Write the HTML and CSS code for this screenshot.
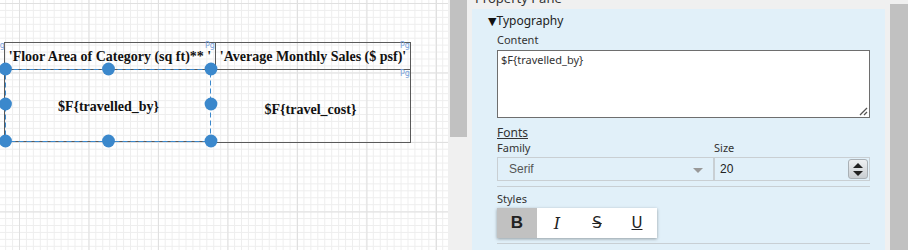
FILE: index.html
```
<!DOCTYPE html>
<html>
<head>
<meta charset="utf-8">
<link rel="stylesheet" href="styles.css">
</head>
<body>
<div class="app">
  <div class="canvas">
    <span class="pg pg-a">Pg</span>
    <div class="cell hcell1">'Floor Area of Category (sq ft)** '</div>
    <span class="pg pg-b">Pg</span>
    <div class="cell hcell2">'Average Monthly Sales ($ psf)'</div>
    <span class="pg pg-c">Pg</span>
    <div class="cell dcell1"><span>$F{travelled_by}</span></div>
    <div class="cell dcell2"><span>$F{travel_cost}</span></div>
    <span class="pg pg-d">Pg</span>
    <svg class="selection" width="448" height="250" viewBox="0 0 448 250">
      <rect x="5.5" y="69.5" width="205" height="72" fill="none" stroke="#3b88cc" stroke-width="1" stroke-dasharray="5 3"/>
      <g fill="#3b88cc">
        <circle cx="5.5" cy="69" r="6.4"/>
        <circle cx="108.5" cy="69" r="6.4"/>
        <circle cx="211" cy="69" r="6.4"/>
        <circle cx="5.5" cy="104" r="6.4"/>
        <circle cx="211" cy="104" r="6.4"/>
        <circle cx="5.5" cy="141" r="6.4"/>
        <circle cx="108.5" cy="141" r="6.4"/>
        <circle cx="211" cy="141" r="6.4"/>
      </g>
    </svg>
  </div>
  <div class="pane">
    <div class="lscroll"><div class="lthumb"></div></div>
    <div class="pane-main">
      <div class="pane-title"><span>Property Pane</span></div>
      <div class="section">
        <div class="sec-head"><span class="tri">&#9660;</span>Typography</div>
        <div class="body">
          <div class="label">Content</div>
          <div class="textarea">$F{travelled_by}
            <svg class="grip" width="9" height="9" viewBox="0 0 9 9"><path d="M1 8 L8 1 M5 8 L8 5" stroke="#555" stroke-width="1.3" fill="none"/></svg>
          </div>
          <div class="label fonts">Fonts</div>
          <div class="row">
            <div class="col-family">
              <div class="label">Family</div>
              <div class="select">Serif<span class="caret"></span></div>
            </div>
            <div class="col-size">
              <div class="label">Size</div>
              <div class="number">20
                <span class="spin"><span class="up"></span><span class="down"></span></span>
              </div>
            </div>
          </div>
          <div class="sep"></div>
          <div class="label styles-label">Styles</div>
          <div class="btns">
            <span class="btn active b">B</span>
            <span class="btn i">I</span>
            <span class="btn s">S</span>
            <span class="btn u">U</span>
          </div>
          <div class="sep sep2"></div>
        </div>
      </div>
    </div>
    <div class="rgap"></div>
    <div class="rscroll"></div>
  </div>
</div>
</body>
</html>
```
FILE: styles.css
```
html, body {
  margin: 0;
  padding: 0;
  width: 908px;
  height: 250px;
  overflow: hidden;
}
.app {
  display: flex;
  width: 908px;
  height: 250px;
}
.canvas {
  position: relative;
  width: 448px;
  height: 250px;
  flex: none;
  overflow: hidden;
  background-color: #fff;
  background-image:
    linear-gradient(to right, #e0e0e0 1px, transparent 1px),
    linear-gradient(to bottom, #e0e0e0 1px, transparent 1px),
    linear-gradient(to right, #eeeeee 1px, transparent 1px),
    linear-gradient(to bottom, #eeeeee 1px, transparent 1px);
  background-size: 69.5px 69.5px, 69.5px 69.5px, 6.95px 6.95px, 6.95px 6.95px;
  background-position: 19px 3px, 19px 3px, 19px 3px, 19px 3px;
}
.cell {
  position: absolute;
  box-sizing: border-box;
  border: 1px solid #5a5a5a;
  font-family: "Liberation Serif", "Times New Roman", serif;
  font-weight: bold;
  font-size: 14px;
  color: #111;
  display: flex;
  align-items: center;
  justify-content: center;
  white-space: pre;
}
.hcell1 { left: 4px; top: 42px; width: 212px; height: 28px; padding-top: 2px; }
.hcell2 { left: 215px; top: 42px; width: 196px; height: 28px; padding-top: 2px; }
.dcell1 { left: 4px; top: 69px; width: 208px; height: 73px; border-top: none; border-right: none; padding-top: 4px; }
.dcell2 { left: 211px; top: 69px; width: 200px; height: 74px; border-top: none; border-left: none; padding-top: 8px; }
.pg {
  position: absolute;
  font-family: "DejaVu Sans", sans-serif;
  font-size: 8px;
  line-height: 7px;
  color: #7aa3dc;
  z-index: 1;
}
.pg-a { left: -5px; top: 42px; }
.pg-b { left: 205px; top: 42px; }
.pg-c { left: 400px; top: 42px; }
.pg-d { left: 400px; top: 70px; }
.selection {
  position: absolute;
  left: 0;
  top: 0;
  z-index: 2;
}
.pane {
  flex: 1;
  display: flex;
  background: #f0f0f0;
  height: 250px;
}
.lscroll {
  width: 24px;
  flex: none;
  padding-left: 2px;
  box-sizing: border-box;
}
.lthumb {
  width: 17px;
  height: 137px;
  background: #c1c1c1;
}
.pane-main {
  width: 413px;
  flex: none;
  display: flex;
  flex-direction: column;
}
.pane-title {
  height: 9px;
  overflow: hidden;
  display: flex;
  align-items: flex-end;
  padding-left: 3px;
  font-family: "Noto Sans", sans-serif;
  font-size: 13px;
  color: #333;
}
.pane-title span {
  line-height: 14px;
  margin-bottom: 4px;
}
.section {
  flex: 1;
  background: #e1f0f9;
  padding-top: 4px;
  font-family: "Noto Sans", sans-serif;
  color: #333;
}
.sec-head {
  font-size: 12px;
  line-height: 16px;
  padding-left: 16px;
  color: #222;
}
.tri {
  font-family: "DejaVu Sans", sans-serif;
  font-size: 11px;
  color: #111;
}
.body {
  padding-left: 25px;
  width: 373px;
}
.label {
  font-size: 11px;
  line-height: 14px;
  color: #333;
}
.body > .label:first-child {
  margin-top: 3px;
}
.textarea {
  position: relative;
  margin-top: 3px;
  box-sizing: border-box;
  height: 68px;
  width: 373px;
  background: #fff;
  border: 1px solid #6e6e6e;
  font-size: 11px;
  line-height: 14px;
  padding: 2px 3px;
  color: #333;
}
.grip {
  position: absolute;
  right: 1px;
  bottom: 1px;
}
.fonts {
  margin-top: 8px;
  text-decoration: underline;
  font-size: 12px;
}
.row {
  display: flex;
  margin-top: 1px;
}
.col-family { width: 217px; }
.col-size { width: 156px; }
.select, .number {
  position: relative;
  margin-top: 2px;
  box-sizing: border-box;
  height: 24px;
  border: 1px solid #c9cfd3;
  font-family: "Liberation Sans", Arial, sans-serif;
  font-size: 12px;
  line-height: 22px;
}
.select {
  padding-left: 11px;
  color: #555;
}
.caret {
  position: absolute;
  right: 10px;
  top: 10px;
  border-left: 5px solid transparent;
  border-right: 5px solid transparent;
  border-top: 5px solid #999;
}
.number {
  padding-left: 5px;
  color: #222;
}
.spin {
  position: absolute;
  right: 1px;
  top: 1px;
  width: 20px;
  height: 20px;
  box-sizing: border-box;
  border: 1px solid #a9b0b5;
  border-radius: 3px;
  background: linear-gradient(#eef0f2, #c9ced2);
  display: flex;
  flex-direction: column;
  align-items: center;
  justify-content: center;
  gap: 3px;
}
.up {
  border-left: 5px solid transparent;
  border-right: 5px solid transparent;
  border-bottom: 5px solid #222;
}
.down {
  border-left: 5px solid transparent;
  border-right: 5px solid transparent;
  border-top: 5px solid #222;
}
.sep {
  margin-top: 5px;
  height: 1px;
  width: 373px;
  background: #c8cfd4;
}
.styles-label {
  margin-top: 5px;
}
.btns {
  margin-top: 2px;
  display: flex;
  width: 160px;
  height: 30px;
  background: #fff;
  box-shadow: 0 1px 3px rgba(0,0,0,0.35);
}
.btn {
  width: 40px;
  height: 30px;
  display: flex;
  align-items: center;
  justify-content: center;
  color: #222;
  font-size: 16px;
}
.btn.active { background: #c1c1c1; }
.b { font-family: "Liberation Sans", Arial, sans-serif; font-weight: bold; font-size: 17px; }
.i { font-family: "DejaVu Serif", serif; font-style: italic; font-size: 16px; }
.s { font-family: "DejaVu Sans", sans-serif; text-decoration: line-through; font-size: 15px; }
.u { font-family: "DejaVu Sans", sans-serif; text-decoration: underline; font-size: 15px; }
.sep2 { margin-top: 5px; }
.rgap { width: 5px; flex: none; }
.rscroll {
  width: 18px;
  flex: none;
  margin-top: 4px;
  background: #c1c1c1;
}
```
